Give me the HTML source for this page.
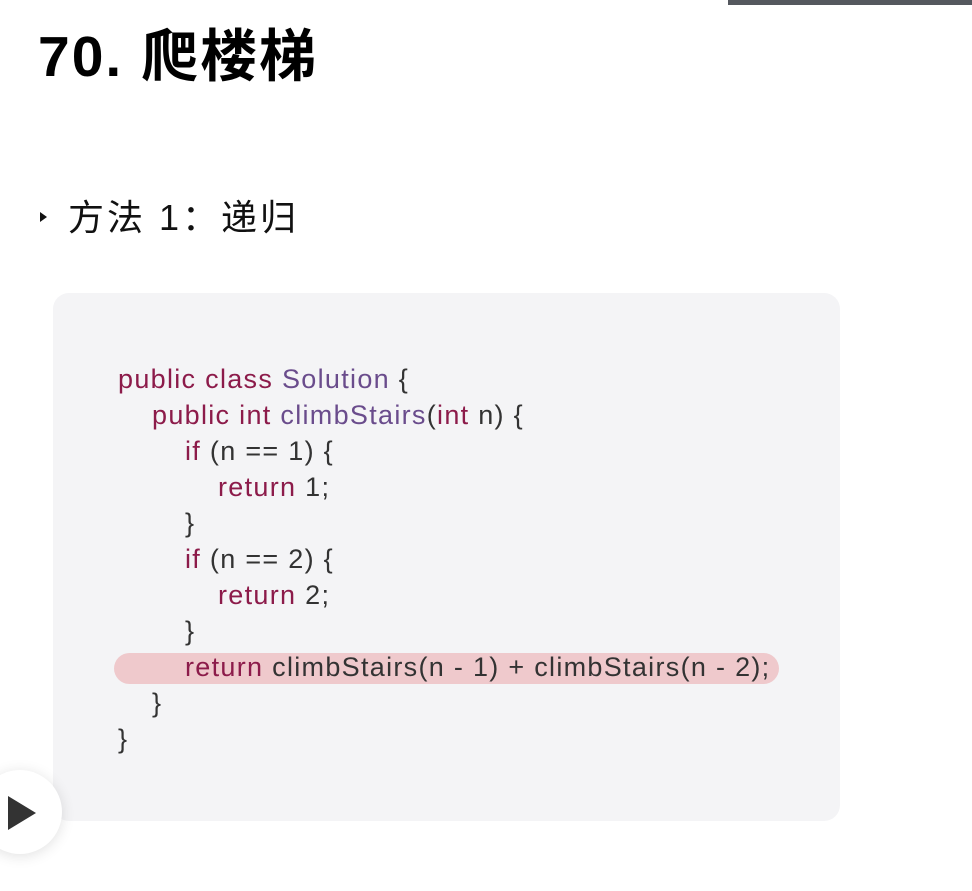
<!DOCTYPE html>
<html><head><meta charset="utf-8"><style>
body{margin:0;width:972px;height:891px;background:#fff;position:relative;overflow:hidden;font-family:"Liberation Sans","Noto Sans CJK SC",sans-serif;}
.bar{position:absolute;left:728px;top:0;width:244px;height:5px;background:#55585e;}
h1{position:absolute;left:38px;top:22px;margin:0;font-size:57px;font-weight:bold;color:#000;line-height:70px;letter-spacing:2px;}
.sum{position:absolute;left:68px;top:196px;font-size:36px;color:#111;line-height:44px;letter-spacing:3px;}
.tri{position:absolute;left:40px;top:212px;width:0;height:0;border-left:7px solid #111;border-top:5px solid transparent;border-bottom:5px solid transparent;}
.code{position:absolute;left:53px;top:293px;width:787px;height:528px;background:#f4f4f6;border-radius:16px;}
.hl{position:absolute;left:114px;top:653px;width:665px;height:31px;background:#efc9cc;border-radius:16px;}
.ln{position:absolute;font-size:27px;line-height:36px;color:#333;white-space:pre;letter-spacing:1.3px;}
.k{color:#8c1b4a}.t{color:#6a4c8c}
.play{position:absolute;left:-22px;top:770px;width:84px;height:84px;border-radius:50%;background:#fff;box-shadow:0 2px 14px rgba(0,0,0,.12);}
.play:after{content:"";position:absolute;left:30px;top:26px;border-left:28px solid #333;border-top:17px solid transparent;border-bottom:17px solid transparent;}
</style></head><body>
<div class="bar"></div>
<h1>70. 爬楼梯</h1>
<div class="tri"></div>
<div class="sum">方法 1：递归</div>
<div class="code"></div>
<div class="hl"></div>
<div class="ln" style="left:118px;top:361px"><span class="k">public class</span> <span class="t">Solution</span> {</div>
<div class="ln" style="left:152px;top:397px"><span class="k">public int</span> <span class="t">climbStairs</span>(<span class="k">int</span> n) {</div>
<div class="ln" style="left:185px;top:433px"><span class="k">if</span> (n == 1) {</div>
<div class="ln" style="left:218px;top:469px"><span class="k">return</span> 1;</div>
<div class="ln" style="left:185px;top:505px">}</div>
<div class="ln" style="left:185px;top:541px"><span class="k">if</span> (n == 2) {</div>
<div class="ln" style="left:218px;top:577px"><span class="k">return</span> 2;</div>
<div class="ln" style="left:185px;top:613px">}</div>
<div class="ln" style="left:185px;top:649px"><span class="k">return</span> climbStairs(n - 1) + climbStairs(n - 2);</div>
<div class="ln" style="left:152px;top:685px">}</div>
<div class="ln" style="left:118px;top:721px">}</div>
<div class="play"></div>
</body></html>
